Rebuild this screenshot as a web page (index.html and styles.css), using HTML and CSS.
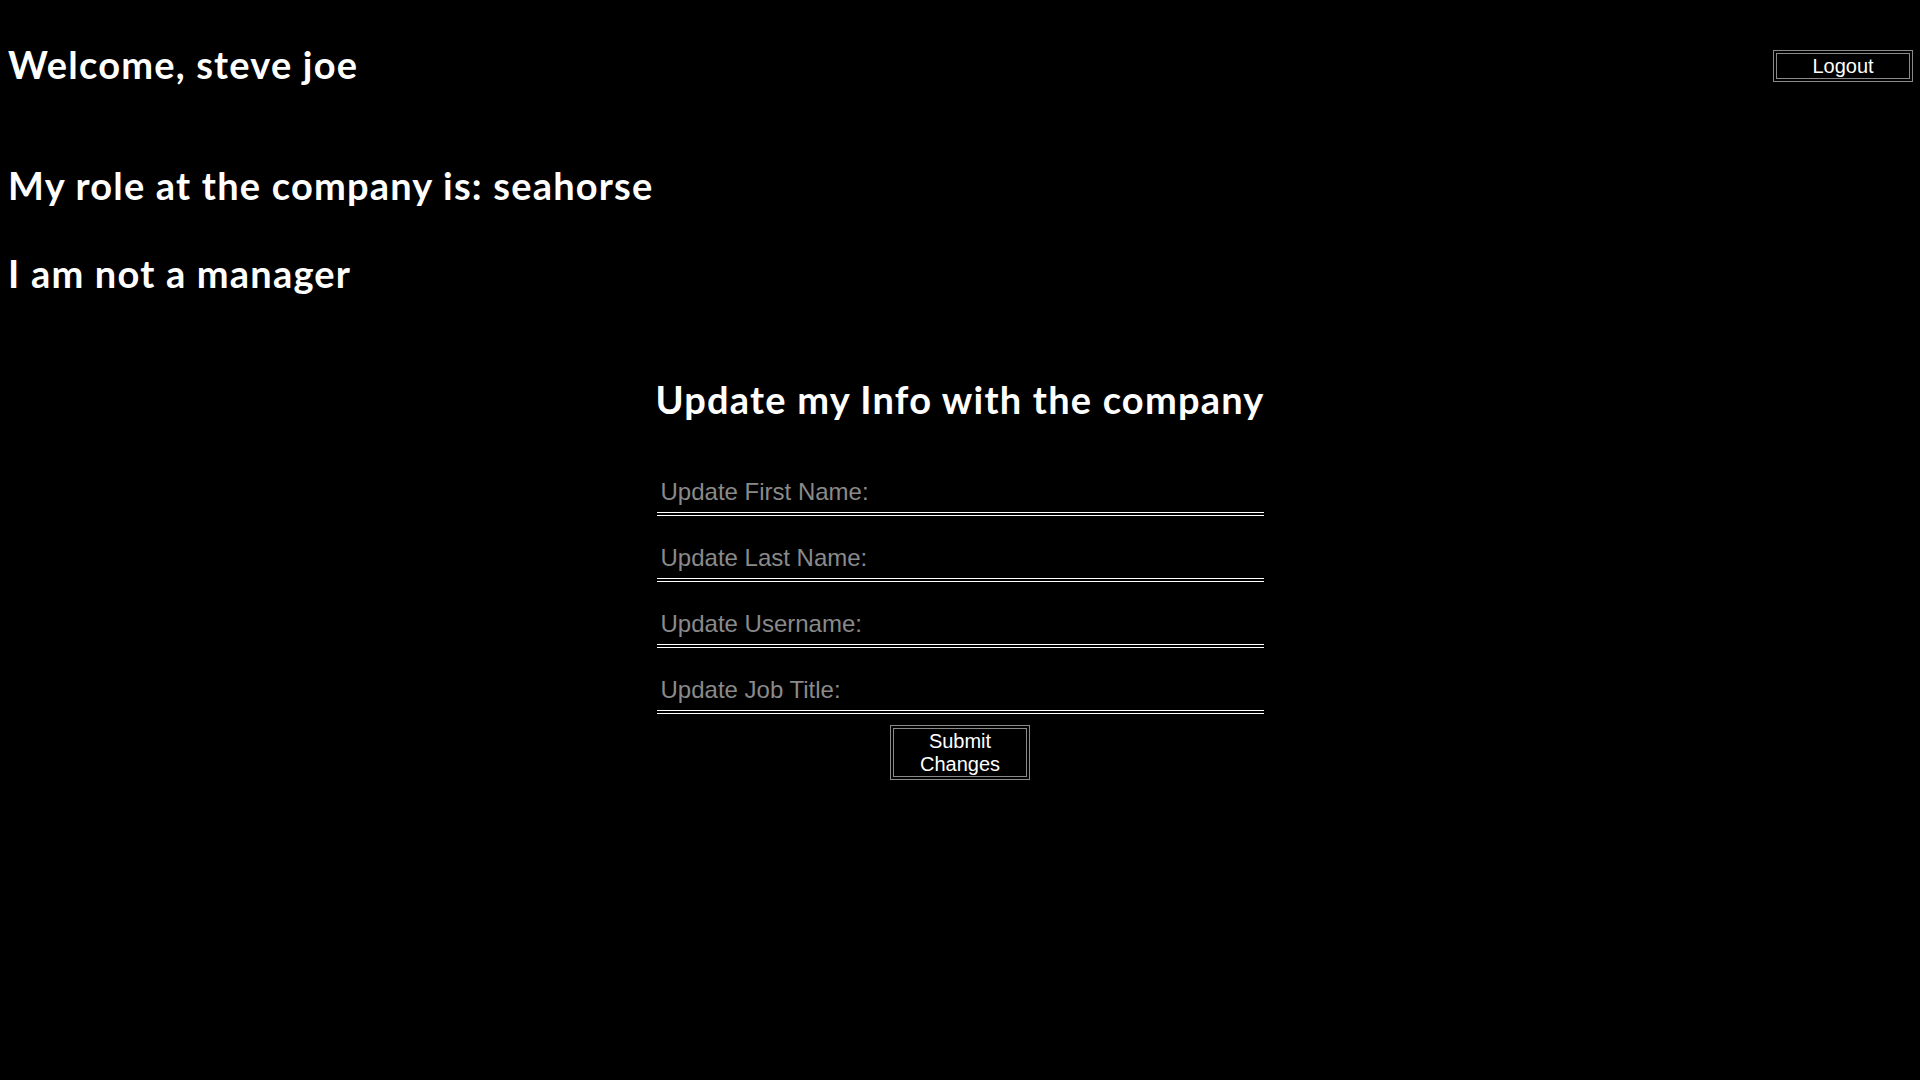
FILE: index.html
```html
<!DOCTYPE html>
<html lang="en">
<head>
<meta charset="utf-8">
<title>Profile</title>
<link rel="stylesheet" href="styles.css">
</head>
<body>
<header class="top">
  <h1 class="title welcome">Welcome, steve joe</h1>
  <button class="btn logout" type="button">Logout</button>
</header>
<section class="info">
  <h1 class="title role">My role at the company is: seahorse</h1>
  <h1 class="title manager">I am not a manager</h1>
</section>
<form class="update">
  <h2 class="title form-title">Update my Info with the company</h2>
  <div class="fields">
    <input class="field" type="text" placeholder="Update First Name:">
    <input class="field" type="text" placeholder="Update Last Name:">
    <input class="field" type="text" placeholder="Update Username:">
    <input class="field" type="text" placeholder="Update Job Title:">
  </div>
  <button class="btn submit" type="button">Submit Changes</button>
</form>
</body>
</html>
```
FILE: styles.css
```css
html, body {
  margin: 0;
  padding: 0;
  background: #000;
  color: #fff;
}
body {
  min-height: 1080px;
}
.title {
  font-family: Lato, "Open Sans", sans-serif;
  font-weight: 700;
  font-size: 38px;
  letter-spacing: 1.2px;
  line-height: 48px;
  margin: 0;
  color: #fff;
  white-space: nowrap;
}
.top {
  display: flex;
  justify-content: space-between;
  align-items: flex-start;
  padding: 0 7px 0 8px;
}
.welcome {
  margin-top: 40px;
}
.btn {
  font-family: "Liberation Sans", Arial, sans-serif;
  font-size: 20px;
  line-height: 23px;
  color: #fff;
  background: #000;
  border: 4px double #8a8a8a;
  width: 140px;
  padding: 1px 0 0;
  margin: 0;
  cursor: pointer;
}
.logout {
  margin-top: 50px;
  height: 32px;
}
.info {
  padding: 0 8px;
}
.role {
  margin-top: 73px;
}
.manager {
  margin-top: 40px;
}
.update {
  width: 607px;
  margin: 78px auto 0;
  display: flex;
  flex-direction: column;
  align-items: center;
}
.form-title {
  text-align: center;
  margin-bottom: 48px;
}
.fields {
  width: 100%;
  display: flex;
  flex-direction: column;
  gap: 21px;
}
.field {
  display: block;
  width: 100%;
  box-sizing: border-box;
  font-family: "Liberation Sans", Arial, sans-serif;
  font-size: 24px;
  line-height: 28px;
  height: 45px;
  padding: 7px 4px 6px;
  background: #000;
  color: #fff;
  border: 0;
  border-bottom: 4px double #fff;
  outline: none;
}
.field::placeholder {
  color: #8a8a8a;
  opacity: 1;
}
.submit {
  margin-top: 11px;
  height: 55px;
}
```
